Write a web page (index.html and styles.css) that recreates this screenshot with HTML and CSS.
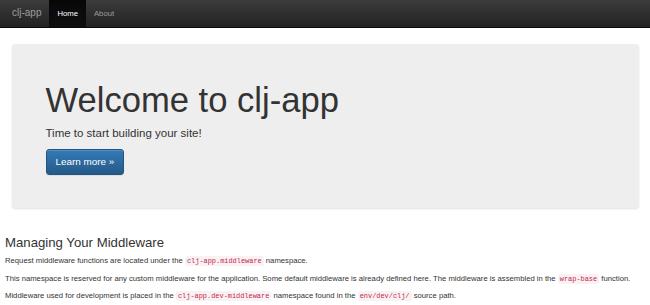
FILE: index.html
```html
<!DOCTYPE html>
<html lang="en">
<head>
  <meta charset="UTF-8">
  <title>Welcome to clj-app</title>
  <link rel="stylesheet" href="styles.css">
</head>
<body>
  <nav class="navbar">
    <a class="brand" href="#">clj-app</a>
    <ul class="nav">
      <li class="active"><a href="#">Home</a></li>
      <li><a href="#">About</a></li>
    </ul>
  </nav>

  <div class="container">
    <div class="jumbotron">
      <h1>Welcome to clj-app</h1>
      <p>Time to start building your site!</p>
      <a class="btn" href="#">Learn more &raquo;</a>
    </div>
  </div>

  <div class="content">
    <h2>Managing Your Middleware</h2>
    <p>Request middleware functions are located under the <code>clj-app.middleware</code> namespace.</p>
    <p>This namespace is reserved for any custom middleware for the application. Some default middleware is already defined here. The middleware is assembled in the <code>wrap-base</code> function.</p>
    <p>Middleware used for development is placed in the <code>clj-app.dev-middleware</code> namespace found in the <code>env/dev/clj/</code> source path.</p>
  </div>
</body>
</html>
```

FILE: styles.css
```css
body {
  margin: 0;
  font-family: "Liberation Sans", Arial, sans-serif;
  font-size: 7.7px;
  line-height: 1.43;
  color: #333;
  background: #fff;
}
a {
  text-decoration: none;
}
.navbar {
  display: flex;
  align-items: stretch;
  height: 27px;
  background: linear-gradient(to bottom, #3c3c3c 0%, #222 100%);
  border-bottom: 1px solid #080808;
  padding-left: 4px;
}
.brand {
  display: flex;
  align-items: center;
  padding: 0 8px;
  font-size: 10px;
  color: #9d9d9d;
}
.nav {
  display: flex;
  margin: 0;
  padding: 0;
  list-style: none;
}
.nav li a {
  display: flex;
  align-items: center;
  height: 100%;
  padding: 0 8px;
  color: #9d9d9d;
}
.nav li.active a {
  color: #fff;
  background: linear-gradient(to bottom, #080808 0%, #0f0f0f 100%);
  box-shadow: inset 0 2px 5px rgba(0, 0, 0, 0.25);
}
.container {
  width: 627px;
  margin: 0 auto;
  padding-top: 16px;
}
.jumbotron {
  background: #eee;
  border-radius: 3px;
  box-shadow: 0 1px 2px rgba(0, 0, 0, 0.12);
  padding: 26px 34px 33px;
  margin-bottom: 28px;
}
.jumbotron h1 {
  margin: 11px 0 6px;
  font-size: 34.6px;
  font-weight: 500;
  line-height: 1.1;
}
.jumbotron p {
  margin: 0 0 8px;
  font-size: 11.5px;
  line-height: 1.43;
}
.btn {
  display: inline-block;
  padding: 5px 9px;
  font-size: 9.9px;
  line-height: 1.33;
  color: #fff;
  background: linear-gradient(to bottom, #337ab7 0%, #265a88 100%);
  border: 1px solid #245580;
  border-radius: 3px;
  box-shadow: inset 0 1px 0 rgba(255, 255, 255, 0.15), 0 1px 1px rgba(0, 0, 0, 0.075);
}
.content {
  padding: 0 5px;
}
.content h2 {
  margin: 0 0 5px;
  font-size: 13.2px;
  font-weight: 500;
  line-height: 1.1;
}
.content p {
  margin: 0 0 6px;
  line-height: 1.5;
}
code {
  padding: 1px 2px;
  font-family: "Liberation Mono", "Courier New", monospace;
  font-size: 90%;
  color: #c7254e;
  background: #f9f2f4;
  border-radius: 2px;
}
```
